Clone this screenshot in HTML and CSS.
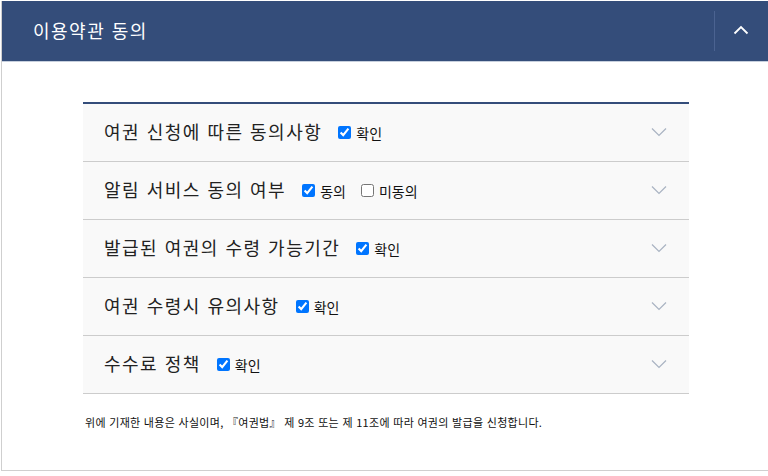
FILE: index.html
```html
<!DOCTYPE html>
<html lang="ko">
<head>
<meta charset="utf-8">
<link rel="stylesheet" href="styles.css">
</head>
<body>
<div class="panel">
  <div class="panel-head">
    <h2 class="panel-title">이용약관 동의</h2>
    <div class="head-toggle">
      <svg width="16" height="10" viewBox="0 0 16 10"><path d="M1.5 8.5 L8 2 L14.5 8.5" fill="none" stroke="#fff" stroke-width="1.8"/></svg>
    </div>
  </div>
  <div class="panel-body">
    <ul class="terms">
      <li class="term">
        <span class="term-title">여권 신청에 따른 동의사항</span>
        <label class="chk"><input type="checkbox" checked><span>확인</span></label>
        <svg class="chev" width="16" height="10" viewBox="0 0 16 10"><path d="M1 1.5 L8 8.5 L15 1.5" fill="none" stroke="#a9b3c2" stroke-width="1.2"/></svg>
      </li>
      <li class="term">
        <span class="term-title">알림 서비스 동의 여부</span>
        <label class="chk"><input type="checkbox" checked><span>동의</span></label>
        <label class="chk"><input type="checkbox"><span>미동의</span></label>
        <svg class="chev" width="16" height="10" viewBox="0 0 16 10"><path d="M1 1.5 L8 8.5 L15 1.5" fill="none" stroke="#a9b3c2" stroke-width="1.2"/></svg>
      </li>
      <li class="term">
        <span class="term-title">발급된 여권의 수령 가능기간</span>
        <label class="chk"><input type="checkbox" checked><span>확인</span></label>
        <svg class="chev" width="16" height="10" viewBox="0 0 16 10"><path d="M1 1.5 L8 8.5 L15 1.5" fill="none" stroke="#a9b3c2" stroke-width="1.2"/></svg>
      </li>
      <li class="term">
        <span class="term-title">여권 수령시 유의사항</span>
        <label class="chk"><input type="checkbox" checked><span>확인</span></label>
        <svg class="chev" width="16" height="10" viewBox="0 0 16 10"><path d="M1 1.5 L8 8.5 L15 1.5" fill="none" stroke="#a9b3c2" stroke-width="1.2"/></svg>
      </li>
      <li class="term">
        <span class="term-title">수수료 정책</span>
        <label class="chk"><input type="checkbox" checked><span>확인</span></label>
        <svg class="chev" width="16" height="10" viewBox="0 0 16 10"><path d="M1 1.5 L8 8.5 L15 1.5" fill="none" stroke="#a9b3c2" stroke-width="1.2"/></svg>
      </li>
    </ul>
    <p class="notice">위에 기재한 내용은 사실이며, 『여권법』 제 9조 또는 제 11조에 따라 여권의 발급을 신청합니다.</p>
  </div>
</div>
</body>
</html>
```
FILE: styles.css
```css
html, body {
  margin: 0;
  padding: 0;
  background: #fff;
}
body {
  font-family: "Noto Sans CJK KR", "Noto Sans", sans-serif;
  color: #222;
}
.panel {
  margin: 1px 0 0 1px;
  width: 767px;
  height: 470px;
  border-left: 1px solid #cfcfcf;
  border-bottom: 1px solid #cfcfcf;
  box-sizing: border-box;
}
.panel-head {
  height: 60px;
  background: #344d7a;
  border-bottom: 1px solid #c6cfdd;
  display: flex;
  align-items: center;
}
.panel-title {
  margin: -2px 0 0 31px;
  flex: 1;
  font-size: 18px;
  font-weight: 400;
  color: #fff;
  line-height: 1;
  letter-spacing: 1.5px;
}
.head-toggle {
  width: 52px;
  height: 40px;
  border-left: 1px solid #4b6391;
  display: flex;
  align-items: center;
  justify-content: center;
  margin-right: 1px;
}
.head-toggle svg {
  display: block;
  margin-top: -2px;
}
.panel-body {
  padding: 40px 0 0 81px;
}
.terms {
  list-style: none;
  margin: 0;
  padding: 0;
  width: 606px;
  border-top: 2px solid #344d7a;
}
.term {
  height: 57px;
  border-bottom: 1px solid #cccccc;
  background: #f9f9f9;
  display: flex;
  align-items: center;
  padding: 0 22px 0 21px;
}
.term-title {
  font-size: 18px;
  color: #222;
  margin: -4px 15px 0 0;
  line-height: 1;
  letter-spacing: 1.5px;
}
.chk {
  display: flex;
  align-items: center;
  font-size: 14px;
  color: #111;
  margin-right: 14px;
}
.chk input {
  width: 13px;
  height: 13px;
  margin: 0 5px 0 1px;
}
.chev {
  margin-left: auto;
  display: block;
  margin-top: -2px;
}
.notice {
  margin: 20px 0 0 2px;
  font-size: 11px;
  color: #111;
  letter-spacing: 0.3px;
}
```
